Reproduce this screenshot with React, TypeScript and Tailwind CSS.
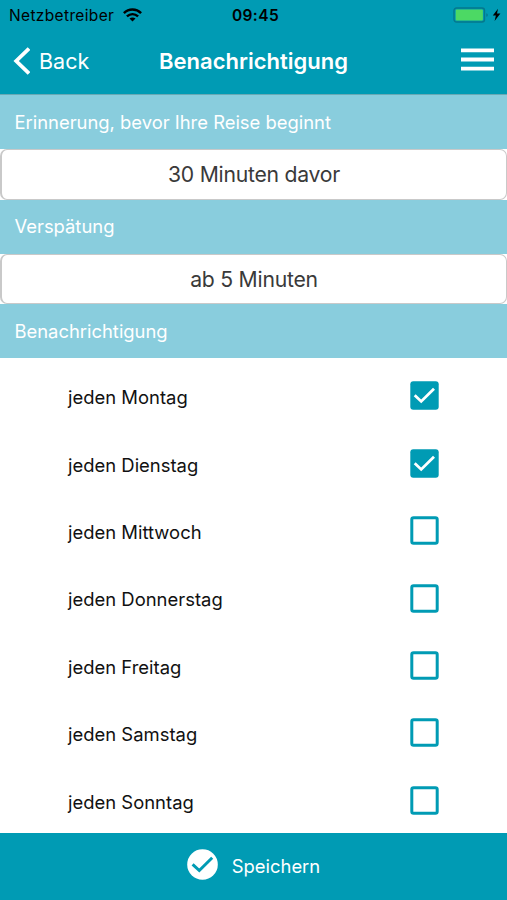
import { useState } from "react";

const days = [
  "Montag",
  "Dienstag",
  "Mittwoch",
  "Donnerstag",
  "Freitag",
  "Samstag",
  "Sonntag",
];

function StatusBar() {
  return (
    <div className="grid h-[29px] grid-cols-3 items-center pl-[9px] pr-[5px] text-black">
      <div className="flex items-center gap-[9px] text-[15.5px] tracking-[0.35px]">
        <span className="pt-[2px]">Netzbetreiber</span>
        <svg className="h-[14px] w-[19px]" viewBox="0 0 19 14" fill="none" stroke="currentColor" strokeWidth="2.5">
          <path d="M0.9 5.1C5.8 0.4 13.2 0.4 18.1 5.1" />
          <path d="M3.9 8.4C7.2 5.4 11.8 5.4 15.1 8.4" />
          <path d="M9.5 13.6L6.5 10.6C8.2 9.1 10.8 9.1 12.5 10.6Z" fill="currentColor" stroke="none" />
        </svg>
      </div>
      <span className="pt-[2px] text-center text-[15.5px] font-semibold tracking-[0.4px]">09:45</span>
      <svg className="h-[16px] w-[49px] justify-self-end" viewBox="0 0 49 16">
        <rect x="1" y="1" width="30.5" height="14" rx="2.5" fill="none" stroke="#05788c" strokeWidth="1.4" />
        <rect x="2.7" y="2.6" width="27.2" height="10.8" rx="1" fill="#4cd964" />
        <path d="M33.3 6.2C35.3 6.7 35.3 9.3 33.3 9.8Z" fill="#05788c" />
        <path d="M45 1.8L39.8 8.6H42.9L41.6 14L47.4 6.6H44Z" fill="#000" />
      </svg>
    </div>
  );
}

function NavBar() {
  return (
    <div className="grid h-[65px] grid-cols-[1fr_auto_1fr] items-center pl-[13px] pr-[13px] text-white">
      <button className="flex items-center gap-[9px] text-[21.5px]">
        <svg className="-mt-[2px] h-[28px] w-[17px]" viewBox="0 0 17 28" fill="none" stroke="currentColor" strokeWidth="3.8">
          <path d="M16 1.5L3.2 14L16 26.5" />
        </svg>
        Back
      </button>
      <h1 className="text-[22px] font-semibold">Benachrichtigung</h1>
      <button className="-mt-[4px] justify-self-end" aria-label="Menu">
        <svg className="h-[23px] w-[33px]" viewBox="0 0 33 23" fill="currentColor">
          <path d="M0 0.4H33V4.2H0ZM0 9.6H33V13.4H0ZM0 18.8H33V22.6H0Z" />
        </svg>
      </button>
    </div>
  );
}

function SectionTitle({ title }: { title: string }) {
  return (
    <h2 className="flex h-[54px] items-center bg-[#89cddd] pt-px pl-[14.5px] text-[18.4px] text-white">
      {title}
    </h2>
  );
}

function Field({ value }: { value: string }) {
  return (
    <button className="block h-[50.5px] w-full rounded-[7px] border border-l-2 border-[#c9c9c9] bg-white pt-[2px] text-center text-[21.2px] tracking-[-0.25px] text-[#3a3a3a]">
      {value}
    </button>
  );
}

function Checkbox({ checked }: { checked: boolean }) {
  return (
    <svg className="h-[29px] w-[29px]" viewBox="0 0 29 29" fill="none">
      {checked ? (
        <>
          <rect x="0.3" y="0.3" width="28.4" height="28.4" rx="3" fill="#009bb4" />
          <path d="M4.7 14.2L11.2 20.4L24 7.7" stroke="#fff" strokeWidth="2.8" />
        </>
      ) : (
        <rect x="1.8" y="1.8" width="25.4" height="25.4" rx="1.8" stroke="#009bb4" strokeWidth="3" />
      )}
    </svg>
  );
}

export default function App() {
  const [selected, setSelected] = useState(["Montag", "Dienstag"]);

  const toggle = (day: string) =>
    setSelected((prev) =>
      prev.includes(day) ? prev.filter((d) => d !== day) : [...prev, day]
    );

  return (
    <div className="flex h-[900px] w-full flex-col overflow-hidden bg-white font-['Inter','Liberation_Sans',sans-serif]">
      <header className="h-[95px] shrink-0 border-b border-[#69a9b5] bg-[#009bb4]">
        <StatusBar />
        <NavBar />
      </header>

      <main className="min-h-0 flex-1">
        <SectionTitle title="Erinnerung, bevor Ihre Reise beginnt" />
        <Field value="30 Minuten davor" />
        <SectionTitle title="Verspätung" />
        <Field value="ab 5 Minuten" />
        <SectionTitle title="Benachrichtigung" />
        <ul className="pt-[4.3px]">
          {days.map((day) => (
            <li key={day}>
              <button
                className="flex h-[67.4px] w-full items-center justify-between pl-[68px] pr-[68px] text-[18.45px] text-[#111]"
                onClick={() => toggle(day)}
              >
                <span className="pt-[4px]">jeden {day}</span>
                <Checkbox checked={selected.includes(day)} />
              </button>
            </li>
          ))}
        </ul>
      </main>

      <button className="flex h-[67px] shrink-0 items-center justify-center gap-[14px] bg-[#009bb4] text-[18.4px] text-white">
        <svg className="-mt-[5px] h-[31px] w-[31px]" viewBox="0 0 31 31" fill="none">
          <circle cx="15.5" cy="15.5" r="15.3" fill="#fff" />
          <path d="M5.6 15.3L12.3 21.5L25.2 8.8" stroke="#009bb4" strokeWidth="3" />
        </svg>
        Speichern
      </button>
    </div>
  );
}
